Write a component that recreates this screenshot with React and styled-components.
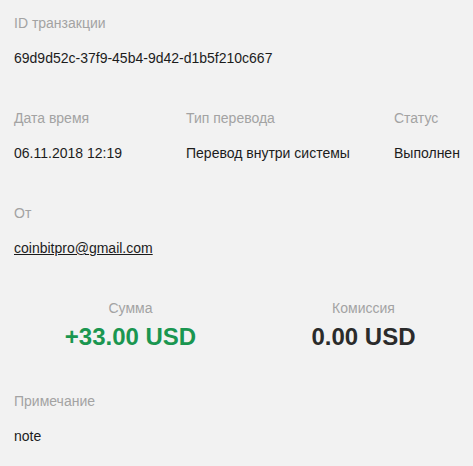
import React from 'react';
import styled, { createGlobalStyle } from 'styled-components';

const GlobalStyle = createGlobalStyle`
  html, body {
    margin: 0;
    padding: 0;
    background: #f2f2f2;
  }
  body {
    font-family: "Liberation Sans", Arial, sans-serif;
  }
`;

const Page = styled.div`
  padding: 13px 0 0 14px;
  display: flex;
  flex-direction: column;
  gap: 40px;
`;

const Row = styled.div`
  display: grid;
  grid-template-columns: ${({ cols }) => cols || '1fr'};
`;

const Field = styled.div`
  display: flex;
  flex-direction: column;
  gap: ${({ center }) => (center ? '5px' : '15px')};
  align-items: ${({ center }) => (center ? 'center' : 'flex-start')};
`;

const Label = styled.div`
  font-size: 14px;
  line-height: 20px;
  color: #a3a3a3;
`;

const Value = styled.div`
  font-size: 14px;
  line-height: 20px;
  color: #1c1c1c;
  white-space: nowrap;
`;

const Email = styled.a`
  font-size: 14px;
  line-height: 20px;
  color: #1c1c1c;
  text-decoration: underline;
`;

const Amount = styled.div`
  font-size: 24px;
  line-height: 28px;
  font-weight: bold;
  color: ${({ positive }) => (positive ? '#1a9650' : '#2b2b2b')};
`;

const App = () => (
  <>
    <GlobalStyle />
    <Page>
      <Field>
        <Label>ID транзакции</Label>
        <Value>69d9d52c-37f9-45b4-9d42-d1b5f210c667</Value>
      </Field>

      <Row cols="172px 208px 1fr">
        <Field>
          <Label>Дата время</Label>
          <Value>06.11.2018 12:19</Value>
        </Field>
        <Field>
          <Label>Тип перевода</Label>
          <Value>Перевод внутри системы</Value>
        </Field>
        <Field>
          <Label>Статус</Label>
          <Value>Выполнен</Value>
        </Field>
      </Row>

      <Field>
        <Label>От</Label>
        <Email href="#">coinbitpro@gmail.com</Email>
      </Field>

      <Row cols="233px 233px">
        <Field center>
          <Label>Сумма</Label>
          <Amount positive>+33.00 USD</Amount>
        </Field>
        <Field center>
          <Label>Комиссия</Label>
          <Amount>0.00 USD</Amount>
        </Field>
      </Row>

      <Field>
        <Label>Примечание</Label>
        <Value>note</Value>
      </Field>
    </Page>
  </>
);

export default App;
